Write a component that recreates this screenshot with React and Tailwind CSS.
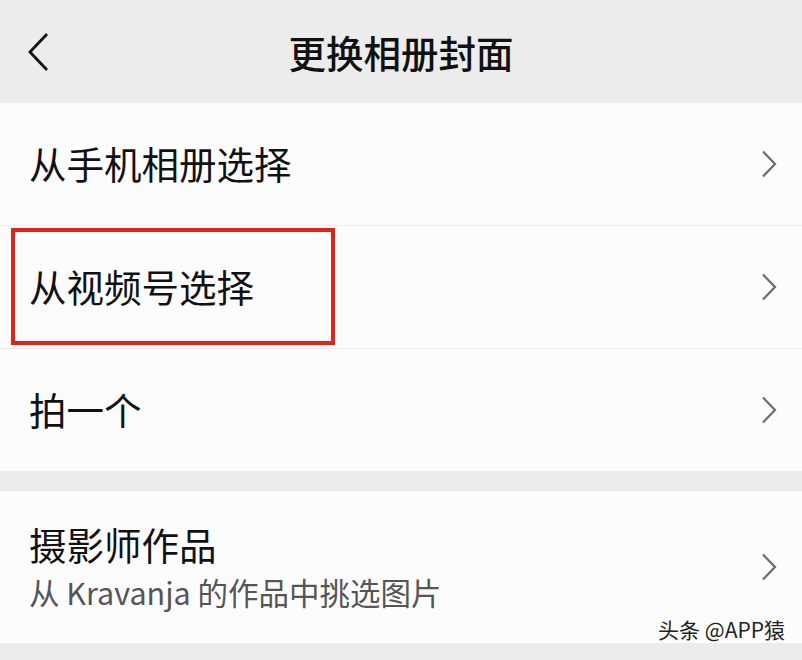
import { Fragment } from "react";

const FONT = { fontFamily: '"Noto Sans CJK SC", "Noto Sans", sans-serif' };

function Chevron() {
  return (
    <svg width="16" height="28" viewBox="0 0 16 28" className="shrink-0">
      <path d="M2 1.5 L14 14 L2 26.5" fill="none" stroke="#6b6b6b" strokeWidth="2.2" />
    </svg>
  );
}

function Row({ title, subtitle, divider, tall }) {
  return (
    <div className="relative">
      <div
        className={`flex items-center justify-between pl-[29px] pr-[25px] ${
          tall ? "h-[152px]" : "h-[122px]"
        }`}
      >
        <div className="flex flex-col">
          <span className="text-[37.5px] leading-[48px] text-[#111] -mt-[3px]">{title}</span>
          {subtitle && (
            <span className="text-[30.5px] leading-[40px] text-[#555] mt-[4px]">{subtitle}</span>
          )}
        </div>
        <Chevron />
      </div>
      {divider && <div className="h-px bg-[#ececec]" />}
    </div>
  );
}

export default function App() {
  const rows = [
    { title: "从手机相册选择" },
    { title: "从视频号选择" },
    { title: "拍一个" },
  ];

  return (
    <div className="relative w-[802px] h-[660px] overflow-hidden bg-[#ececec]" style={FONT}>
      <div className="relative h-[102px] flex items-center justify-center">
        <svg width="24" height="40" viewBox="0 0 24 40" className="absolute left-[27px] top-[32px]">
          <path d="M20 2 L3 20 L20 38" fill="none" stroke="#111" strokeWidth="2.8" />
        </svg>
        <span className="text-[37.5px] font-medium text-[#111] leading-none mt-[2px]">更换相册封面</span>
      </div>

      <div className="bg-[#fdfcfd] mt-px">
        {rows.map((r, i) => (
          <Fragment key={r.title}>
            <Row title={r.title} divider={i < rows.length - 1} />
          </Fragment>
        ))}
      </div>

      <div className="h-[20px]" />

      <div className="bg-[#fdfcfd]">
        <Row title="摄影师作品" subtitle="从 Kravanja 的作品中挑选图片" tall />
      </div>

      <div className="absolute left-[11px] top-[228px] w-[324px] h-[117px] border-[4px] border-[#e2231a]" />

      <div
        className="absolute right-[17px] top-[616px] text-[21px] leading-[26px] text-[#222]"
        style={{ textShadow: "0 0 2px #fff, 0 0 2px #fff" }}
      >
        头条 @APP猿
      </div>
    </div>
  );
}
